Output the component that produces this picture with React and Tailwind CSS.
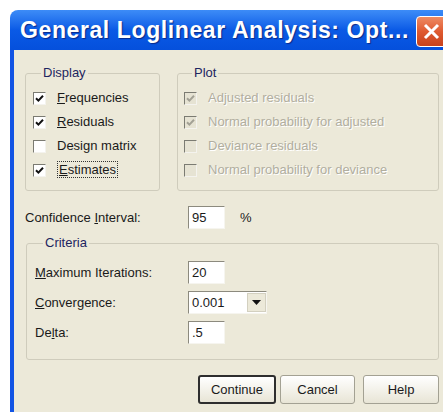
// Options dialog for the general loglinear procedure, XP style
const face = { fontFamily: '"Liberation Sans", Arial, sans-serif' };

const Check = ({ checked, disabled }) => (
  <span
    className={`flex h-[13px] w-[13px] shrink-0 items-center justify-center border border-t-[#7b7b72] border-l-[#7b7b72] border-b-[#f4f3ee] border-r-[#f4f3ee] ${
      disabled ? 'bg-[#e6e3d3]' : 'bg-white'
    }`}
  >
    {checked && (
      <svg width="9" height="9" viewBox="0 0 9 9">
        <path
          d="M1 4.2 L3.4 6.6 L8 1.8"
          fill="none"
          stroke={disabled ? '#a3a195' : '#111'}
          strokeWidth="2"
        />
      </svg>
    )}
  </span>
);

const CheckRow = ({ checked, disabled, children }) => (
  <div className="flex h-[24px] items-center gap-[11px]">
    <Check checked={checked} disabled={disabled} />
    <span
      className={
        disabled
          ? 'text-[#b1ae9f] [text-shadow:1px_1px_0_#fff]'
          : 'text-[#1a1a1a]'
      }
    >
      {children}
    </span>
  </div>
);

const Group = ({ title, className, children }) => (
  <fieldset className={`rounded-[3px] border border-[#cfccbc] ${className}`}>
    <legend className="ml-[8px] px-[2px] leading-[16px] text-[#1d2560]">{title}</legend>
    {children}
  </fieldset>
);

const Field = ({ value, className = 'w-[37px]' }) => (
  <div
    className={`flex h-[23px] items-center border border-t-[#8c8a7e] border-l-[#8c8a7e] border-b-[#f6f5ef] border-r-[#f6f5ef] bg-white pl-[3px] text-[#1a1a1a] ${className}`}
  >
    {value}
  </div>
);

const Btn = ({ children, main, className }) => (
  <button
    className={`flex h-[29px] items-center justify-center rounded-[3px] bg-gradient-to-b from-white to-[#e8e5d6] text-[#1a1a1a] ${
      main ? 'border-2 border-[#2e2e2e]' : 'border border-[#a3a193]'
    } ${className}`}
  >
    {children}
  </button>
);

export default function App() {
  return (
    <div className="h-[412px] w-[443px] overflow-hidden bg-white pl-[10px] pt-[10px]" style={face}>
      <div className="flex w-[440px] flex-col">
        {/* title bar */}
        <div className="flex h-[40px] items-center rounded-t-[8px] bg-gradient-to-b from-[#3d8cf7] via-[#0a5ae6] to-[#0550dc] pl-[10px]">
          <span className="whitespace-nowrap text-[23px] font-bold tracking-[0.6px] text-white [text-shadow:1px_1px_1px_#0a2a8a]">
            General Loglinear Analysis: Opt...
          </span>
          <div className="ml-auto mr-[3px] mt-[2px] flex h-[31px] w-[31px] shrink-0 items-center justify-center rounded-[4px] border border-white bg-gradient-to-b from-[#ee8a62] via-[#df5a30] to-[#c7421c]">
            <svg width="17" height="17" viewBox="0 0 17 17">
              <path d="M2 2 L15 15 M15 2 L2 15" stroke="#fff" strokeWidth="3" />
            </svg>
          </div>
        </div>

        {/* body */}
        <div className="h-[362px] border-l-4 border-[#1254e4] bg-[#ece9d9] pl-[11px] pt-[15px] text-[13px] leading-[16px]">
          <div className="flex gap-[17px]">
            <Group title="Display" className="w-[135px] pb-[8px] pl-[7px] pt-[5px]">
              <CheckRow checked>
                <u>F</u>requencies
              </CheckRow>
              <CheckRow checked>
                <u>R</u>esiduals
              </CheckRow>
              <CheckRow>Design matrix</CheckRow>
              <CheckRow checked>
                <span className="border border-dotted border-[#333] px-[1px]">
                  <u>E</u>stimates
                </span>
              </CheckRow>
            </Group>
            <Group title="Plot" className="w-[262px] pb-[8px] pl-[6px] pt-[5px]">
              <CheckRow checked disabled>Adjusted residuals</CheckRow>
              <CheckRow checked disabled>Normal probability for adjusted</CheckRow>
              <CheckRow disabled>Deviance residuals</CheckRow>
              <CheckRow disabled>Normal probability for deviance</CheckRow>
            </Group>
          </div>

          <div className="mt-[15px] flex items-center">
            <span className="w-[163px] text-[#1a1a1a]">
              Confidence <u>I</u>nterval:
            </span>
            <Field value="95" />
            <span className="ml-[15px] text-[#1a1a1a]">%</span>
          </div>

          <Group title="Criteria" className="ml-px mt-[6px] w-[413px] pb-[15px] pl-[8px] pt-[10px]">
            <div className="flex flex-col gap-[7px]">
              <div className="flex items-center">
                <span className="w-[153px] text-[#1a1a1a]">
                  <u>M</u>aximum Iterations:
                </span>
                <Field value="20" />
              </div>
              <div className="flex items-center">
                <span className="w-[153px] text-[#1a1a1a]">
                  <u>C</u>onvergence:
                </span>
                <div className="flex h-[23px] w-[79px] items-center border border-t-[#8c8a7e] border-l-[#8c8a7e] border-b-[#f6f5ef] border-r-[#f6f5ef] bg-white pl-[3px] text-[#1a1a1a]">
                  <span className="flex-1">0.001</span>
                  <span className="flex h-[19px] w-[19px] items-center justify-center border border-[#d3d0c0] bg-[#ece9d9]">
                    <svg width="9" height="5" viewBox="0 0 9 5">
                      <path d="M0 0 H9 L4.5 5 Z" fill="#111" />
                    </svg>
                  </span>
                </div>
              </div>
              <div className="flex items-center">
                <span className="w-[153px] text-[#1a1a1a]">
                  De<u>l</u>ta:
                </span>
                <Field value=".5" />
              </div>
            </div>
          </Group>

          <div className="ml-[173px] mt-[15px] flex gap-[4px]">
            <Btn main className="w-[78px]">Continue</Btn>
            <Btn className="w-[75px]">Cancel</Btn>
            <Btn className="ml-[4px] w-[76px]">Help</Btn>
          </div>
        </div>
      </div>
    </div>
  );
}
